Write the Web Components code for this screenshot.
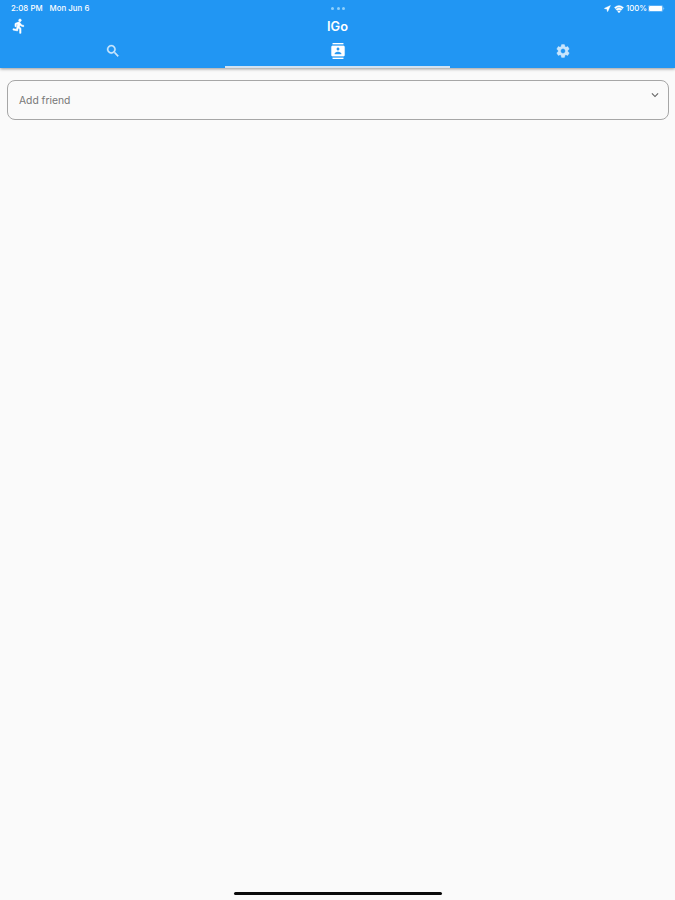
<!DOCTYPE html>
<html lang="en">
<head>
<meta charset="UTF-8">
<meta name="viewport" content="width=device-width, initial-scale=1">
<title>IGo</title>
<style>
    body { margin: 0; background: #fafafa; font-family: Inter, "Liberation Sans", sans-serif; }
</style>
</head>
<body>
<igo-app></igo-app>

<script>
const ICONS = {
    run: 'M13.49 5.48c1.1 0 2-.9 2-2s-.9-2-2-2-2 .9-2 2 .9 2 2 2zm-3.6 13.9l1-4.4 2.1 2v6h2v-7.5l-2.1-2 .6-3c1.3 1.5 3.3 2.5 5.5 2.5v-2c-1.9 0-3.5-1-4.3-2.4l-1-1.6c-.4-.6-1-1-1.7-1-.3 0-.5.1-.8.1l-5.2 2.2v4.7h2v-3.4l1.8-.7-1.6 8.1-4.9-1-.4 2 7 1.4z',
    search: 'M15.5 14h-.79l-.28-.27C15.41 12.59 16 11.11 16 9.5 16 5.91 13.09 3 9.5 3S3 5.91 3 9.5 5.91 16 9.5 16c1.61 0 3.09-.59 4.23-1.57l.27.28v.79l5 4.99L20.49 19l-4.99-5zm-6 0C7.01 14 5 11.99 5 9.5S7.01 5 9.5 5 14 7.01 14 9.5 11.99 14 9.5 14z',
    contacts: 'M20 0H4v2h16V0zM4 24h16v-2H4v2zM20 4H4c-1.1 0-2 .9-2 2v12c0 1.1.9 2 2 2h16c1.1 0 2-.9 2-2V6c0-1.1-.9-2-2-2zm-8 2.75c1.24 0 2.25 1.01 2.25 2.25s-1.01 2.25-2.25 2.25S9.75 10.24 9.75 9 10.76 6.75 12 6.75zM17 17H7v-1.5c0-1.67 3.33-2.5 5-2.5s5 .83 5 2.5V17z',
    settings: 'M19.14 12.94c.04-.3.06-.61.06-.94 0-.32-.02-.64-.07-.94l2.03-1.58c.18-.14.23-.41.12-.61l-1.92-3.32c-.12-.22-.37-.29-.59-.22l-2.39.96c-.5-.38-1.03-.7-1.62-.94l-.36-2.54c-.04-.24-.24-.41-.48-.41h-3.84c-.24 0-.43.17-.47.41l-.36 2.54c-.59.24-1.13.57-1.62.94l-2.39-.96c-.22-.08-.47 0-.59.22L2.74 8.87c-.12.21-.08.47.12.61l2.03 1.58c-.05.3-.09.63-.09.94s.02.64.07.94l-2.03 1.58c-.18.14-.23.41-.12.61l1.92 3.32c.12.22.37.29.59.22l2.39-.96c.5.38 1.03.7 1.62.94l.36 2.54c.05.24.24.41.48.41h3.84c.24 0 .44-.17.47-.41l.36-2.54c.59-.24 1.13-.56 1.62-.94l2.39.96c.22.08.47 0 .59-.22l1.92-3.32c.12-.22.07-.47-.12-.61l-2.01-1.58zM12 15.6c-1.98 0-3.6-1.62-3.6-3.6s1.62-3.6 3.6-3.6 3.6 1.62 3.6 3.6-1.62 3.6-3.6 3.6z',
    location: 'M22 2L2 11v1.5l8.2 1.3L11.5 22H13L22 2z',
    wifi: 'M12 21.5l3.4-4.1a5.2 5.2 0 0 0-6.8 0L12 21.5zM1 8.3l2.5 3a13.3 13.3 0 0 1 17 0l2.5-3a17.2 17.2 0 0 0-22 0zM4.6 12.6l2.7 3.2a7.4 7.4 0 0 1 9.4 0l2.7-3.2a11.6 11.6 0 0 0-14.8 0z',
    chevron: 'M7.41 8.59L12 13.17l4.59-4.58L18 10l-6 6-6-6 1.41-1.41z'
};

class IgoIcon extends HTMLElement {
    constructor() {
        super();
        this.attachShadow({ mode: 'open' });
    }

    connectedCallback() {
        this.shadowRoot.innerHTML = `
            <style>
                :host { display: block; flex: none; width: var(--size, 16px); height: var(--size, 16px); }
                svg {
                    display: block; width: 100%; height: 100%; fill: currentColor;
                    stroke: currentColor; stroke-width: var(--weight, 0);
                }
            </style>
            <svg viewBox="0 0 24 24"><path d="${ICONS[this.getAttribute('name')]}"/></svg>
        `;
    }
}
customElements.define('igo-icon', IgoIcon);

class StatusBar extends HTMLElement {
    constructor() {
        super();
        this.attachShadow({ mode: 'open' });
        this.shadowRoot.innerHTML = `
            <style>
                :host {
                    display: grid; grid-template-columns: 1fr auto 1fr; align-items: center;
                    height: 17px; padding: 0 10px 0 11px; box-sizing: border-box;
                    font-size: 7.8px; line-height: 17px; font-weight: 500; white-space: nowrap;
                }
                .left { display: flex; gap: 7px; letter-spacing: 0.04px; }
                .dots { display: flex; gap: 2.6px; }
                .dots i { width: 3px; height: 3px; border-radius: 50%; background: #8fd0fb; }
                .right { display: flex; align-items: center; justify-content: flex-end; }
                .location { --size: 7px; --weight: 1.5; margin-right: 3px; }
                .wifi { --size: 10px; --weight: 0.8; margin-right: 2px; }
                .battery { width: 17px; height: 7px; margin-left: 1px; }
            </style>
            <div class="left"><span>2:08 PM</span><span>Mon Jun 6</span></div>
            <div class="dots"><i></i><i></i><i></i></div>
            <div class="right">
                <igo-icon class="location" name="location"></igo-icon>
                <igo-icon class="wifi" name="wifi"></igo-icon>
                <span>100%</span>
                <svg class="battery" viewBox="0 0 17 7">
                    <rect x=".3" y=".3" width="14.6" height="6.4" rx="1.8" fill="none" stroke="#fff" stroke-width=".5" opacity=".6"/>
                    <rect x="1" y="1" width="13.2" height="5" rx="1.1" fill="#fff"/>
                    <path d="M15.5 2.4c1 .4 1 1.8 0 2.2z" fill="#fff" opacity=".6"/>
                </svg>
            </div>
        `;
    }
}
customElements.define('status-bar', StatusBar);

class AppBar extends HTMLElement {
    constructor() {
        super();
        this.attachShadow({ mode: 'open' });
        this.shadowRoot.innerHTML = `
            <style>
                :host {
                    display: grid; grid-template-columns: 1fr auto 1fr; align-items: center;
                    height: 18px; padding: 0 11px; box-sizing: border-box;
                }
                .title { margin: 1px 0 -1px; font-size: 12.8px; line-height: 18px; font-weight: 600; }
            </style>
            <slot name="leading"></slot>
            <div class="title"><slot></slot></div>
        `;
    }
}
customElements.define('app-bar', AppBar);

class TabItem extends HTMLElement {
    constructor() {
        super();
        this.attachShadow({ mode: 'open' });
        this.shadowRoot.innerHTML = `
            <style>
                :host {
                    display: flex; flex: 1; align-items: center; justify-content: center;
                    box-sizing: border-box; border-bottom: 2px solid transparent;
                    color: rgba(255, 255, 255, 0.75); --weight: 0.5;
                }
                :host([selected]) { color: #fff; border-bottom-color: #d3e2f0; --weight: 0.3; }
            </style>
            <slot></slot>
        `;
    }
}
customElements.define('tab-item', TabItem);

class SelectField extends HTMLElement {
    constructor() {
        super();
        this.attachShadow({ mode: 'open' });
        this.shadowRoot.innerHTML = `
            <style>
                :host {
                    display: flex; justify-content: space-between; box-sizing: border-box;
                    height: 40px; padding: 0 6px 0 11px;
                    border: 1px solid #a6a6a6; border-radius: 8px;
                }
                .label { font-size: 10.3px; line-height: 38px; color: #777; }
                igo-icon { --size: 14px; margin-top: 7px; color: #666; }
            </style>
            <span class="label"><slot></slot></span>
            <igo-icon name="chevron"></igo-icon>
        `;
    }
}
customElements.define('select-field', SelectField);

class IgoApp extends HTMLElement {
    constructor() {
        super();
        this.attachShadow({ mode: 'open' });
        this.shadowRoot.innerHTML = `
            <style>
                :host { display: flex; flex-direction: column; height: 100vh; overflow: hidden; }
                header { background: #2196f3; color: #fff; box-shadow: 0 1px 3px rgba(0, 0, 0, 0.4); }
                header igo-icon[name="run"] { --weight: 0.9; }
                nav { display: flex; height: 33px; }
                main { flex: 1; padding: 12px 6px 0 7px; }
                .home { width: 208px; height: 3px; margin: 0 auto 5px; border-radius: 2px; background: #0a0a0a; }
            </style>
            <header>
                <status-bar></status-bar>
                <app-bar>
                    <igo-icon slot="leading" name="run"></igo-icon>
                    IGo
                </app-bar>
                <nav>
                    <tab-item><igo-icon name="search"></igo-icon></tab-item>
                    <tab-item selected><igo-icon name="contacts"></igo-icon></tab-item>
                    <tab-item><igo-icon name="settings"></igo-icon></tab-item>
                </nav>
            </header>
            <main>
                <select-field>Add friend</select-field>
            </main>
            <div class="home"></div>
        `;
    }
}
customElements.define('igo-app', IgoApp);
</script>
</body>
</html>
